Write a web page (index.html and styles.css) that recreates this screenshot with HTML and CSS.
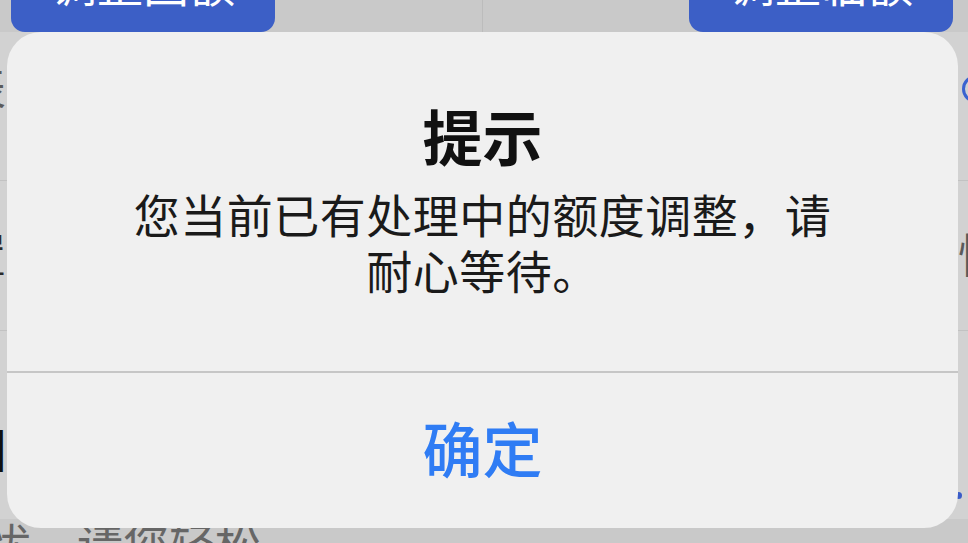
FILE: index.html
```html
<!DOCTYPE html>
<html lang="zh-CN">
<head>
<meta charset="utf-8">
<title>提示</title>
<link rel="stylesheet" href="styles.css">
</head>
<body>
<div class="page">
  <div class="topbar">
    <div class="tbtn">调整固额</div>
    <div class="vdiv"></div>
    <div class="tbtn">调整临额</div>
  </div>
  <div class="row r1">
    <span class="ch gray">表</span>
    <span class="ring"></span>
  </div>
  <div class="row r2">
    <span class="ch dark">置</span>
    <span class="ch gray right">忧</span>
  </div>
  <div class="row r3">
    <span class="ch bold">图</span>
    <span class="dot"></span>
  </div>
  <div class="foot">忧，请您轻松</div>
</div>

<div class="dialog">
  <div class="dlg-body">
    <div class="title">提示</div>
    <div class="msg">您当前已有处理中的额度调整，请耐心等待。</div>
  </div>
  <div class="dlg-line"></div>
  <div class="dlg-btn">确定</div>
</div>
</body>
</html>
```

FILE: styles.css
```css
html, body {
  margin: 0;
  padding: 0;
  width: 968px;
  height: 543px;
  overflow: hidden;
}

body {
  font-family: "Noto Sans CJK SC", "Noto Sans", sans-serif;
  background: #c9c9c9;
  position: relative;
}

.page {
  width: 968px;
  height: 543px;
  display: flex;
  flex-direction: column;
  overflow: hidden;
}

.topbar {
  height: 32px;
  flex: none;
  display: flex;
  justify-content: space-between;
  align-items: flex-end;
  padding: 0 15px 0 11px;
  background: #c9c9c9;
}

.tbtn {
  width: 264px;
  height: 60px;
  box-sizing: border-box;
  background: #3c5fc6;
  border-radius: 14px;
  color: #fff;
  font-size: 46px;
  line-height: 46px;
  display: flex;
  align-items: flex-end;
  justify-content: center;
  padding-bottom: 27px;
}

.vdiv {
  width: 1px;
  height: 32px;
  background: #bcbcbc;
}

.row {
  display: flex;
  justify-content: space-between;
  align-items: flex-start;
  margin: 0 -40px;
  background: #d2d2d2;
  box-sizing: border-box;
  flex: none;
}

.ch {
  font-size: 46px;
  line-height: 46px;
  width: 46px;
}

.gray { color: #5a5a5a; }
.dark { color: #2a2a2a; }
.bold { color: #111; font-weight: 700; }
.right { margin-right: 4px; }

.r1 {
  height: 149px;
  padding-top: 30px;
  border-bottom: 1px solid #c2c2c2;
}

.ring {
  width: 28px;
  height: 28px;
  box-sizing: border-box;
  border: 3px solid #3a62d0;
  border-radius: 50%;
  margin: 13px 18px 0 0;
}

.r2 {
  height: 150px;
  padding-top: 48px;
  border-bottom: 1px solid #c2c2c2;
}

.r3 {
  height: 188px;
  padding-top: 93px;
}

.dot {
  width: 7px;
  height: 7px;
  border-radius: 50%;
  background: #3a5cc8;
  margin: 68px 46px 0 0;
}

.foot {
  flex: 1;
  min-height: 0;
  font-size: 46px;
  line-height: 46px;
  color: #666;
  margin-left: -15px;
  white-space: nowrap;
  background: #c9c9c9;
}

/* modal dialog over the page */
.dialog {
  position: absolute;
  left: 7px;
  top: 32px;
  width: 951px;
  height: 496px;
  border-radius: 34px;
  background: #f0f0f0;
  display: flex;
  flex-direction: column;
  overflow: hidden;
}

.dlg-body {
  height: 339px;
  flex: none;
  box-sizing: border-box;
  padding: 70px 110px 0;
  text-align: center;
}

.title {
  font-size: 60px;
  line-height: 66px;
  font-weight: 700;
  color: #111;
}

.msg {
  margin-top: 17px;
  font-size: 46px;
  letter-spacing: 0.5px;
  line-height: 56px;
  color: #1a1a1a;
}

.dlg-line {
  height: 2px;
  flex: none;
  background: #c6c6c6;
}

.dlg-btn {
  flex: 1;
  display: flex;
  align-items: center;
  justify-content: center;
  padding-bottom: 8px;
  font-size: 60px;
  font-weight: 500;
  color: #2f7cf4;
}
```
